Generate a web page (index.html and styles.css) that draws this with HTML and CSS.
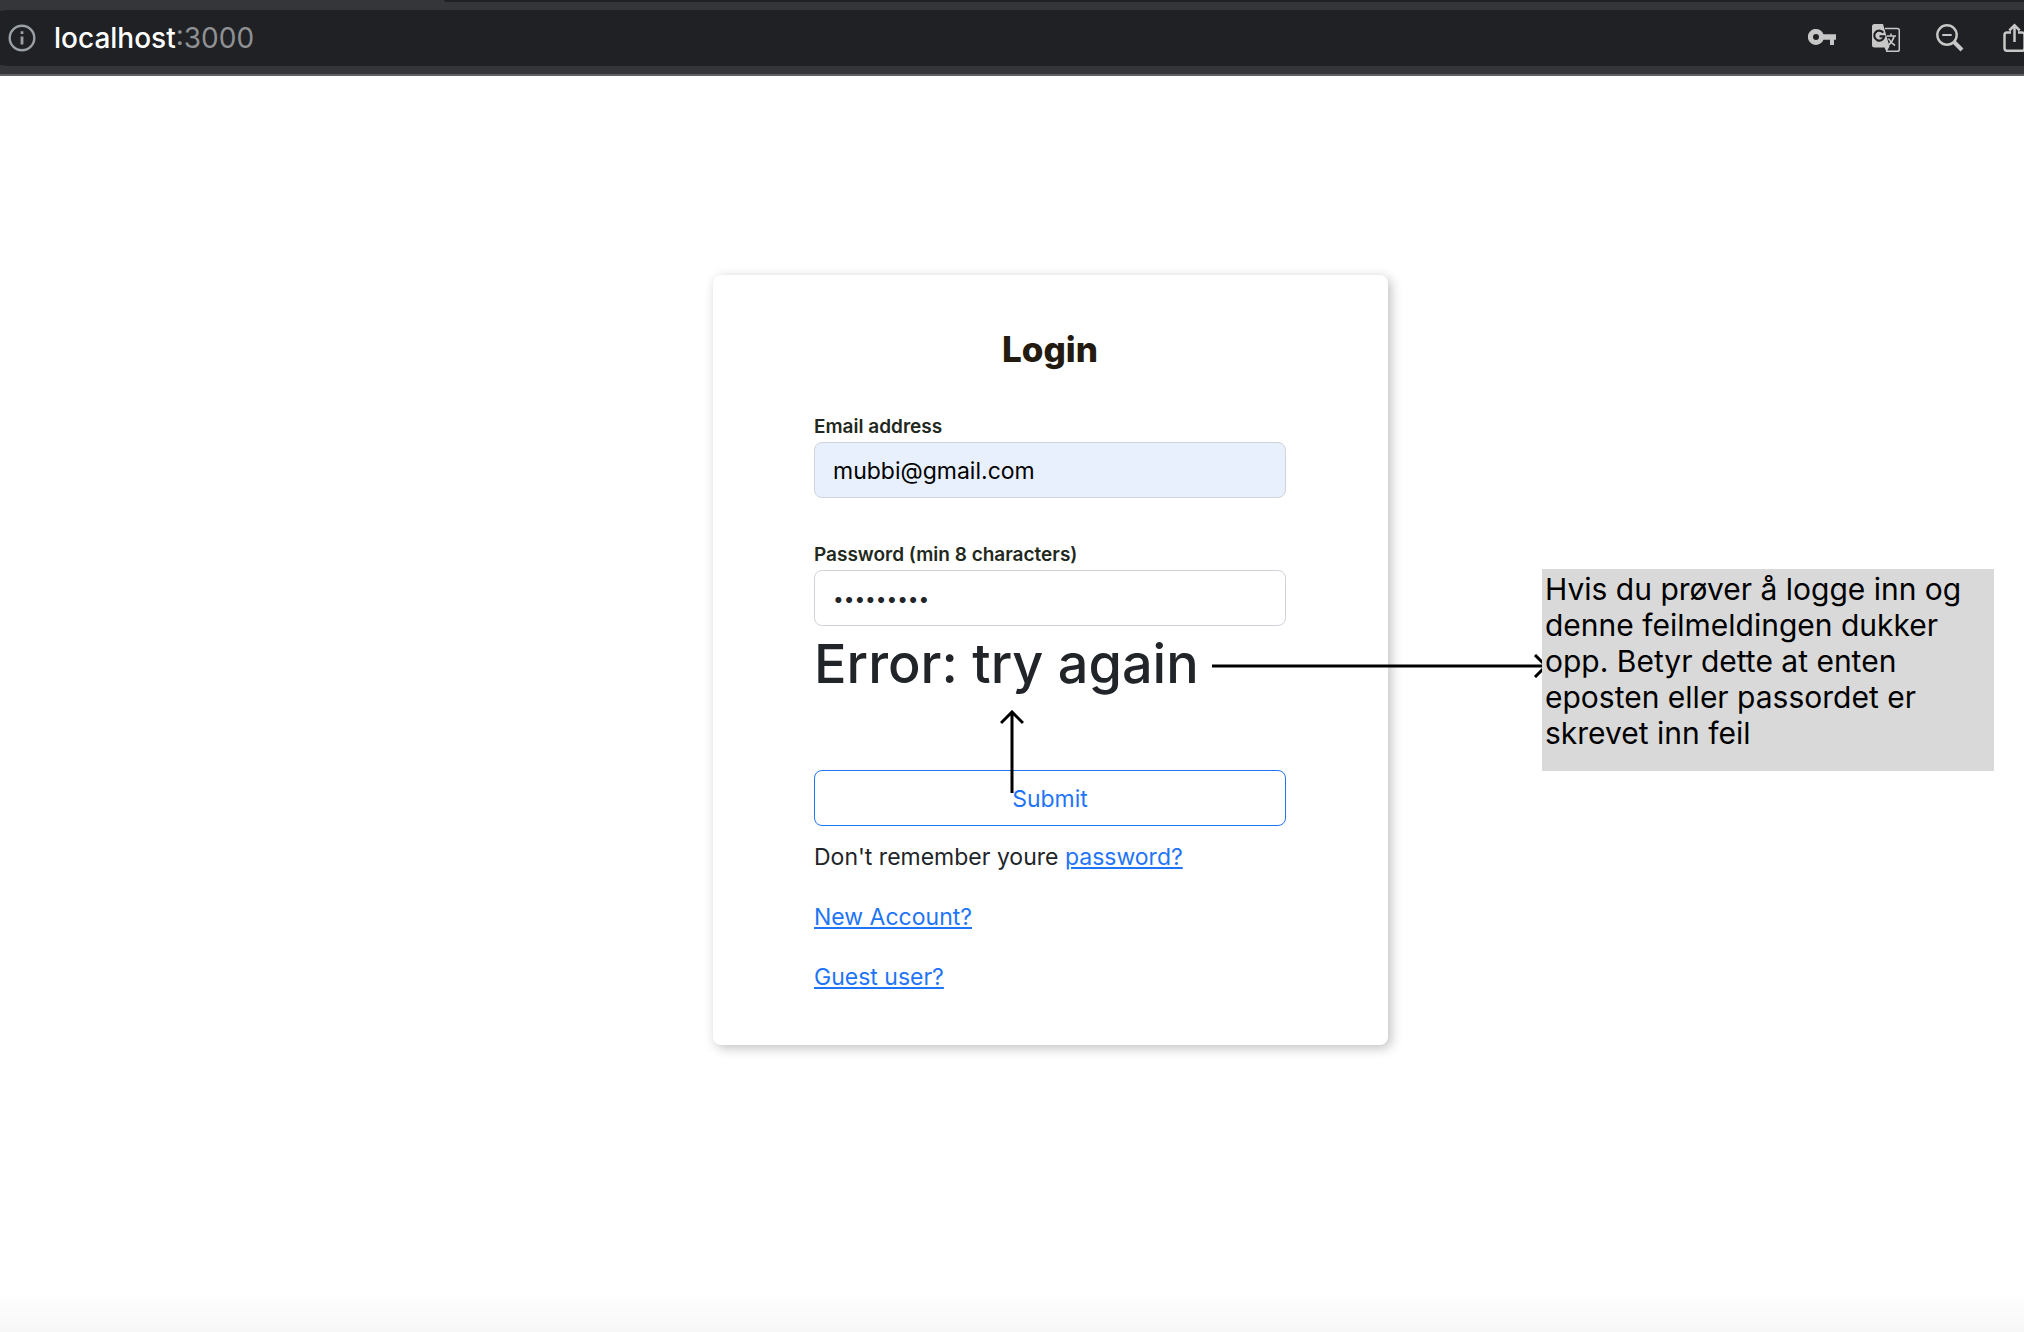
FILE: index.html
```html
<!DOCTYPE html>
<html lang="no">
<head>
<meta charset="utf-8">
<meta name="viewport" content="width=device-width, initial-scale=1">
<title>Login</title>
<link rel="stylesheet" href="styles.css">
</head>
<body>
<header class="toolbar">
  <div class="tab-strip"></div>
  <div class="omnibox">
    <svg class="icon" width="28" height="28" viewBox="0 0 28 28" fill="none" stroke="#9aa0a6" aria-hidden="true"><circle cx="14" cy="14" r="12.3" stroke-width="2.4"/><path d="M14 12.5v8M14 7.2v2.8" stroke-width="2.8"/></svg>
    <span class="address">localhost<span class="port">:3000</span></span>
    <div class="actions">
      <button class="action" type="button" aria-label="Passwords"><svg width="28" height="28" viewBox="0 0 28 28" fill="#c7c7c7"><path fill-rule="evenodd" d="M15.4 10.2A8 8 0 1 0 15.4 15.7H22V21H26V15.7H28V10.2ZM8 10a3 3 0 1 1 0 6a3 3 0 0 1 0-6Z"/></svg></button>
      <button class="action" type="button" aria-label="Translate"><svg width="28" height="28" viewBox="0 0 28 28"><path d="M13 4.500H25.500Q27.300 4.500 27.300 6.500V25.500Q27.300 27.300 25.500 27.300H14" fill="none" stroke="#c7c7c7" stroke-width="1.500"/><path d="M2.500 0H11L17.500 22.500L14.500 28L12.500 23.500H2.500Q0 23.500 0 21V2.500Q0 0 2.500 0Z" fill="#c7c7c7"/><path d="M11.300 8.700A5 5 0 1 0 12.200 12.300H7.500" fill="none" stroke="#202124" stroke-width="2.200"/><path d="M14.800 12H24M19 9.500V12M22 12.500Q20.500 18 16.500 21M16.500 14.500Q18.500 18.500 23 21.500" fill="none" stroke="#c7c7c7" stroke-width="1.600"/></svg></button>
      <button class="action" type="button" aria-label="Zoom"><svg width="28" height="28" viewBox="0 0 28 28" fill="none" stroke="#c7c7c7"><circle cx="11" cy="11" r="9.700" stroke-width="2.400"/><path d="M6.300 11H15.700" stroke-width="2"/><path d="M18 18L26 26" stroke-width="4"/></svg></button>
      <button class="action" type="button" aria-label="Share"><svg width="28" height="30" viewBox="0 0 28 30" fill="none" stroke="#c7c7c7" stroke-width="2.500"><path d="M8 9.500H4Q1.500 9.500 1.500 12V25Q1.500 27.800 4 27.800H19Q21.500 27.800 21.500 25V12Q21.500 9.500 19 9.500H15M11.500 19V2.500M6.300 7.500L11.500 2.300L16.700 7.500"/></svg></button>
    </div>
  </div>
</header>
<main class="page">
  <section class="card">
    <h1 class="title">Login</h1>
    <form class="form">
      <div class="field">
        <label class="label" for="email">Email address</label>
        <input class="input filled" id="email" type="email" value="mubbi@gmail.com">
      </div>
      <div class="field">
        <label class="label" for="password">Password (min 8 characters)</label>
        <input class="input secret" id="password" type="password" value="abcdefghi">
      </div>
      <p class="error">Error: try again</p>
      <button class="submit" type="submit">Submit</button>
    </form>
    <div class="links">
      <p>Don't remember youre <a href="#password">password?</a></p>
      <p><a href="#register">New Account?</a></p>
      <p><a href="#guest">Guest user?</a></p>
    </div>
    <svg class="arrow arrow-up" width="24" height="84" viewBox="0 0 24 84" fill="none" stroke="#000" stroke-width="3" aria-hidden="true"><path d="M12 83V2M1 13L12 2L23 13"/></svg>
    <svg class="arrow arrow-right" width="336" height="24" viewBox="0 0 336 24" fill="none" stroke="#000" stroke-width="3" aria-hidden="true"><path d="M0 12H334M323 1L334 12L323 23"/></svg>
    <aside class="note">Hvis du prøver å logge inn og denne feilmeldingen dukker opp. Betyr dette at enten eposten eller passordet er skrevet inn feil</aside>
  </section>
</main>
</body>
</html>
```

FILE: styles.css
```css
* {
  box-sizing: border-box;
}

body {
  margin: 0;
  min-height: 100vh;
  overflow-x: hidden;
  display: flex;
  flex-direction: column;
  font-family: Inter, "Liberation Sans", sans-serif;
  font-size: 23px;
  line-height: 36px;
  color: #212529;
  background: #fff;
}

h1,
p {
  margin: 0;
}

.toolbar {
  height: 76px;
  background: #35363a;
  border-bottom: 2px solid #5f6064;
}

.tab-strip {
  height: 2px;
  margin-left: 444px;
  background: #202124;
  border-bottom-left-radius: 8px;
}

.omnibox {
  display: flex;
  align-items: center;
  gap: 18px;
  height: 56px;
  margin: 8px 0 0 -20px;
  padding-left: 28px;
  background: #202124;
  border-radius: 28px 0 0 28px;
  overflow: hidden;
}

.icon {
  flex: none;
}

.address {
  flex: 1;
  font-size: 28px;
  font-weight: 500;
  color: #fff;
}

.port {
  font-weight: 400;
  color: #8f9093;
}

.actions {
  display: flex;
  align-items: center;
  gap: 36px;
  margin-right: -7px;
}

.action {
  display: flex;
  padding: 0;
  border: 0;
  background: none;
}

.action:last-child {
  margin-left: 3px;
}

.page {
  flex: 1;
  display: flex;
  justify-content: center;
  align-items: flex-start;
  padding: 199px 0 60px 77px;
  background: linear-gradient(to top, #f7f7f7, #fff 40px);
}

.card {
  position: relative;
  width: 675px;
  padding: 52px 102px 50px 101px;
  border-radius: 8px;
  background: #fff;
  box-shadow: 3px 3px 12px rgba(0, 0, 0, 0.25);
}

.title {
  margin-bottom: 44px;
  font-size: 35px;
  line-height: 44px;
  font-weight: 800;
  text-align: center;
  color: #231a10;
}

.form,
.field {
  display: flex;
  flex-direction: column;
}

.field {
  gap: 3px;
}

.field + .field {
  margin-top: 45px;
}

.label {
  font-size: 19px;
  line-height: 24px;
  font-weight: 600;
  color: #1f2920;
}

.input,
.submit {
  width: 100%;
  height: 56px;
  border: 1px solid #ced4da;
  border-radius: 8px;
  font: inherit;
  background: #fff;
}

.input {
  padding: 2px 18px 0;
  color: #212529;
}

.filled {
  color: #000;
  background: #e8f0fe;
}

.secret {
  font-size: 19px;
}

.error {
  margin-top: 2px;
  font-size: 54px;
  line-height: 72px;
  font-weight: 500;
  white-space: nowrap;
}

.submit {
  margin-top: 70px;
  padding: 2px 0 0;
  border-color: #1f74f8;
  color: #1f74f8;
}

.links {
  display: flex;
  flex-direction: column;
  gap: 24px;
  margin-top: 13px;
}

.links a {
  color: #1f74f8;
}

.arrow,
.note {
  position: absolute;
}

.arrow-up {
  left: 287px;
  top: 435px;
}

.arrow-right {
  left: 499px;
  top: 379px;
}

.note {
  left: 829px;
  top: 294px;
  width: 452px;
  height: 202px;
  padding: 2px 3px;
  font-size: 30px;
  color: #000;
  background: #d9d9d9;
}
```
